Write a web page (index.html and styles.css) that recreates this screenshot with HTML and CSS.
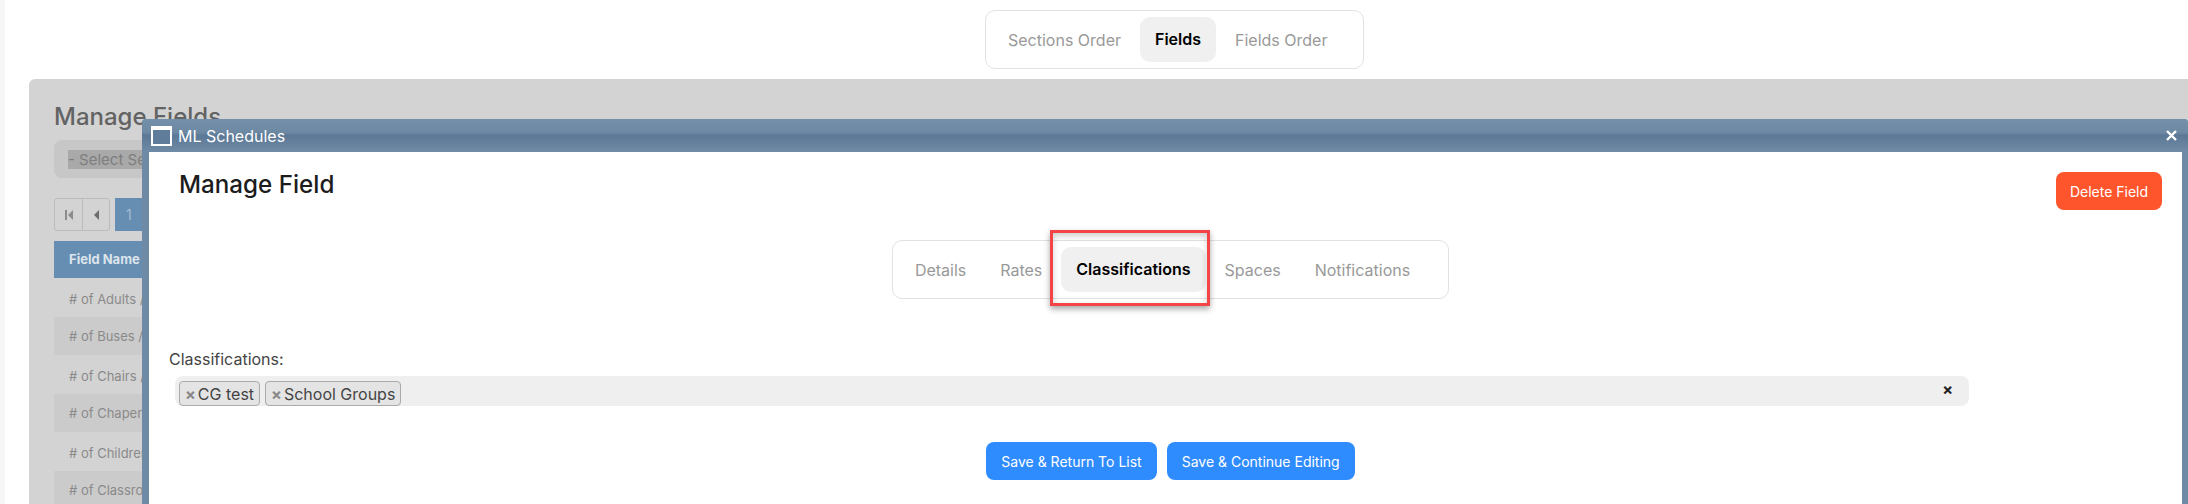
FILE: index.html
```html
<!DOCTYPE html>
<html lang="en">
<head>
    <meta charset="UTF-8">
    <title>Manage Fields</title>
    <link rel="stylesheet" href="styles.css">
</head>
<body>

    <div class="side-strip"></div>

    <div class="main">
        <!-- Top tabs -->
        <div class="tabs top-tabs">
            <a class="tab">Sections Order</a>
            <a class="tab active">Fields</a>
            <a class="tab">Fields Order</a>
        </div>

        <!-- Page behind the dialog -->
        <div class="panel">
            <h1>Manage Fields</h1>
            <div class="section-select"><span>- Select Section -</span></div>
            <div class="pager">
                <div class="pager-group">
                    <button>
                        <svg width="9" height="12" viewBox="0 0 9 12"><path d="M1 1h2v10H1zM9 1v10L4 6z" fill="#8c8c8c"/></svg>
                    </button>
                    <button>
                        <svg width="6" height="12" viewBox="0 0 6 12"><path d="M6 1v10L1 6z" fill="#6e6e6e"/></svg>
                    </button>
                </div>
                <div class="pager-current">1</div>
            </div>
            <div class="grid-head">Field Name</div>
            <div class="grid-row"># of Adults / Chaperones</div>
            <div class="grid-row shaded"># of Buses / Vans</div>
            <div class="grid-row"># of Chairs / Tables</div>
            <div class="grid-row shaded"># of Chaperones</div>
            <div class="grid-row"># of Children</div>
            <div class="grid-row shaded"># of Classrooms</div>
        </div>
    </div>

    <!-- Dialog -->
    <div class="dialog">
        <div class="dialog-title">
            <span class="window-icon"></span>
            <span class="dialog-name">ML Schedules</span>
            <span class="dialog-close">
                <svg width="11" height="11" viewBox="0 0 11 11"><path d="M1 1l9 9M10 1l-9 9" stroke="#fff" stroke-width="2.4"/></svg>
            </span>
        </div>
        <div class="dialog-body">
            <div class="field-head">
                <h2>Manage Field</h2>
                <button class="btn btn-delete">Delete Field</button>
            </div>

            <div class="tabs-row">
                <div class="tabs">
                    <a class="tab">Details</a>
                    <a class="tab">Rates</a>
                    <a class="tab active">Classifications</a>
                    <a class="tab">Spaces</a>
                    <a class="tab">Notifications</a>
                </div>
            </div>

            <label class="field-label">Classifications:</label>
            <div class="multi-select">
                <span class="chip"><i>×</i>CG test</span>
                <span class="chip"><i>×</i>School Groups</span>
                <span class="clear-all">×</span>
            </div>

            <div class="actions">
                <button class="btn btn-save">Save &amp; Return To List</button>
                <button class="btn btn-save">Save &amp; Continue Editing</button>
            </div>
        </div>

        <!-- Red annotation box -->
        <div class="highlight-box"></div>
    </div>

</body>
</html>
```

FILE: styles.css
```css
html, body {
    margin: 0;
    height: 504px;
    overflow: hidden;
}

body {
    display: flex;
    position: relative;
    background-color: #fff;
    font-family: Inter, "Liberation Sans", sans-serif;
    font-size: 16px;
}

h1, h2 {
    margin: 0;
}

button {
    font-family: inherit;
}

.side-strip {
    width: 5px;
    background-color: #f6f6f6;
}

.main {
    flex: 1;
    min-width: 0;
    padding-top: 10px;
}

/* Tabs */
.tabs {
    display: inline-flex;
    gap: 4px;
    height: 59px;
    box-sizing: border-box;
    padding: 6px 23px 6px 7px;
    border: 1px solid #e2e2e2;
    border-radius: 10px;
    background-color: #fff;
}

.top-tabs {
    margin-left: 980px;
    display: flex;
    width: 379px;
}

.tab {
    display: flex;
    align-items: center;
    padding: 1px 15px 0;
    border-radius: 10px;
    color: #999;
    white-space: nowrap;
}

.tab.active {
    padding-top: 0;
    padding-bottom: 1px;
    background-color: #f0f0f0;
    color: #000;
    font-weight: 600;
}

/* Page behind the dialog */
.panel {
    margin-top: 10px;
    margin-left: 24px;
    height: 425px;
    box-sizing: border-box;
    padding: 24px 25px 0;
    background-color: #d3d3d3;
    border-top-left-radius: 6px;
    overflow: hidden;
}

.panel h1 {
    font-size: 24px;
    line-height: 28px;
    font-weight: 500;
    color: #636363;
}

.section-select {
    margin-top: 9px;
    width: 600px;
    height: 38px;
    box-sizing: border-box;
    padding: 11px 14px 0;
    border-radius: 8px;
    background-color: #c7c7c7;
    color: #7e7e7e;
    font-size: 15px;
    line-height: 17px;
}

.section-select span {
    background-color: #a9a9a9;
}

.pager {
    display: flex;
    gap: 5px;
    margin-top: 20px;
    height: 33px;
}

.pager-group {
    display: flex;
    width: 56px;
    box-sizing: border-box;
    border: 1px solid #bcbcbc;
    border-radius: 3px;
}

.pager-group button {
    flex: 1;
    padding: 0;
    border: none;
    background: none;
    display: flex;
    align-items: center;
    justify-content: center;
}

.pager-group button + button {
    border-left: 1px solid #bcbcbc;
}

.pager-current {
    width: 60px;
    padding-left: 11px;
    background-color: #668eb3;
    color: #a5bcd2;
    font-size: 14px;
    line-height: 33px;
}

.grid-head {
    margin-top: 10px;
    height: 37px;
    padding-left: 15px;
    background-color: #668eb3;
    color: #dce4ec;
    font-size: 13px;
    font-weight: 700;
    line-height: 37px;
}

.grid-row {
    height: 38.5px;
    padding-left: 15px;
    color: #8a8a8a;
    font-size: 13px;
    line-height: 42px;
}

.grid-row.shaded {
    background-color: #cbcbcb;
    line-height: 38px;
}

/* Dialog */
.dialog {
    position: absolute;
    left: 142px;
    top: 119px;
    right: 0;
    bottom: 0;
    box-sizing: border-box;
    padding: 0 6px 0 7px;
    background-color: #6f8aa5;
    border-radius: 4px 4px 0 0;
}

.dialog-title {
    display: flex;
    align-items: center;
    height: 33px;
    margin: 0 -6px 0 -7px;
    padding: 0 9px;
    border-radius: 4px 4px 0 0;
    background: linear-gradient(#748fa9, #6d89a4 40%, #5b7896 50%, #708ba5);
    color: #fff;
}

.window-icon {
    width: 21px;
    height: 20px;
    box-sizing: border-box;
    border: 2px solid #fff;
    border-top-width: 4px;
    background-color: #5f7c9a;
}

.dialog-name {
    margin-left: 6px;
    font-size: 16px;
}

.dialog-close {
    display: flex;
    margin-left: auto;
    margin-right: 2px;
}

.dialog-body {
    height: 352px;
    box-sizing: border-box;
    padding: 20px 10px 0 20px;
    background-color: #fff;
}

.field-head {
    display: flex;
    justify-content: space-between;
    padding: 0 10px 0 10px;
}

.field-head h2 {
    font-size: 24.2px;
    line-height: 26px;
    font-weight: 500;
    color: #1c1c1c;
}

.btn {
    height: 38px;
    padding: 0 15px;
    border: none;
    border-radius: 8px;
    color: #fff;
    font-size: 14px;
    white-space: nowrap;
}

.btn-delete {
    width: 106px;
    padding: 0;
    background-color: #ff552d;
}

.btn-save {
    background-color: #2f8cff;
}

.tabs-row {
    display: flex;
    justify-content: center;
    margin-top: 30px;
}

.field-label {
    display: block;
    margin-top: 50px;
    line-height: 20px;
    color: #444;
}

.multi-select {
    display: flex;
    gap: 5px;
    position: relative;
    width: 1794px;
    height: 30px;
    box-sizing: border-box;
    margin: 7px 0 0 6px;
    padding: 5px 0 0 4px;
    border-radius: 8px;
    background-color: #efefef;
}

.chip {
    display: flex;
    align-items: center;
    height: 25px;
    box-sizing: border-box;
    padding: 0 5px;
    border: 1px solid #aaa;
    border-radius: 4px;
    background-color: #e4e4e4;
    color: #444;
    white-space: nowrap;
}

.chip i {
    margin-right: 2px;
    color: #888;
    font-style: normal;
    font-weight: 700;
}

.clear-all {
    position: absolute;
    right: 16px;
    top: 3px;
    color: #222;
    font-weight: 700;
}

.actions {
    display: flex;
    justify-content: center;
    gap: 10px;
    margin-top: 36px;
}

.highlight-box {
    position: absolute;
    left: 908px;
    top: 111px;
    width: 160px;
    height: 76px;
    box-sizing: border-box;
    border: 3px solid #f44448;
    box-shadow: 0 3px 6px rgba(0, 0, 0, 0.35), inset 0 3px 6px rgba(0, 0, 0, 0.2);
}
```
